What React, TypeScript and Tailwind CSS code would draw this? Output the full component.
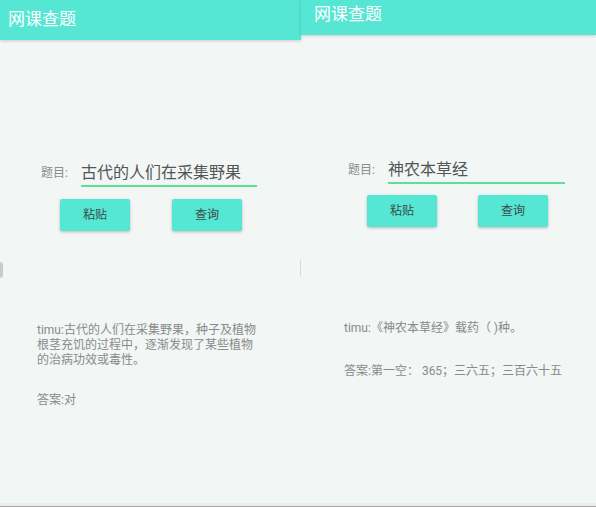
import React from 'react'

const font = { fontFamily: 'Roboto, "Noto Sans CJK SC", "Noto Sans", sans-serif' }

interface PanelProps {
  headerH: string
  titleX: string
  question: string
  rowTop: string
  labelX: string
  inputW: string
  btnTop: string
  btnX: string
  btnGap: string
  textTop: string
  textX: string
  textW: string
  lines: string[]
  answerGap: string
  answer: string
  width: string
}

function Panel(p: PanelProps) {
  return (
    <div className={`flex flex-col ${p.width} h-full bg-[#f2f6f5] relative`}>
      {/* Toolbar */}
      <div className={`${p.headerH} bg-[#55e6d4] shadow-[0_1px_3px_rgba(0,0,0,0.18)] flex items-end z-10`}>
        <div className={`${p.titleX} text-white text-[17px] leading-none pb-[12px]`}>网课查题</div>
      </div>

      {/* Input row */}
      <div className={`flex items-end ${p.rowTop} ${p.labelX}`}>
        <span className="text-[12px] text-[#8d8d8d] w-[40px] pb-[5px]">题目:</span>
        <div className={`${p.inputW} border-b-2 border-[#5fdf91] text-[16px] leading-[22px] text-[#555] pb-[1px]`}>
          {p.question}
        </div>
      </div>

      {/* Buttons */}
      <div className={`flex ${p.btnTop} ${p.btnX} ${p.btnGap}`}>
        <button className="w-[70px] h-[32px] bg-[#55e6d4] rounded-[2px] shadow-[0_1px_3px_rgba(0,0,0,0.25)] text-[12px] text-[#3d4a48]">
          粘贴
        </button>
        <button className="w-[70px] h-[32px] bg-[#55e6d4] rounded-[2px] shadow-[0_1px_3px_rgba(0,0,0,0.25)] text-[12px] text-[#3d4a48]">
          查询
        </button>
      </div>

      {/* Result */}
      <div className={`${p.textTop} ${p.textX} ${p.textW} text-[12px] leading-[15px] text-[#8a8a8a]`}>
        {p.lines.map((l, i) => (
          <div key={i}>{l}</div>
        ))}
      </div>
      <div className={`${p.answerGap} ${p.textX} text-[12px] leading-[15px] text-[#8a8a8a]`}>{p.answer}</div>
    </div>
  )
}

export default function App() {
  return (
    <div style={font} className="w-[596px] h-[507px] flex flex-col overflow-hidden bg-[#f2f6f5]">
      <div className="flex flex-1 relative">
        <Panel
          width="w-[301px]"
          headerH="h-[40px]"
          titleX="pl-[8px]"
          question="古代的人们在采集野果"
          rowTop="mt-[122px]"
          labelX="pl-[41px]"
          inputW="w-[176px]"
          btnTop="mt-[12px]"
          btnX="pl-[60px]"
          btnGap="gap-[42px]"
          textTop="mt-[92px]"
          textX="pl-[37px]"
          textW="w-[270px]"
          lines={['timu:古代的人们在采集野果，种子及植物', '根茎充饥的过程中，逐渐发现了某些植物', '的治病功效或毒性。']}
          answerGap="mt-[25px]"
          answer="答案:对"
        />
        <Panel
          width="w-[295px]"
          headerH="h-[35px]"
          titleX="pl-[13px]"
          question="神农本草经"
          rowTop="mt-[124px]"
          labelX="pl-[47px]"
          inputW="w-[177px]"
          btnTop="mt-[11px]"
          btnX="pl-[66px]"
          btnGap="gap-[41px]"
          textTop="mt-[94px]"
          textX="pl-[43px]"
          textW="w-[260px]"
          lines={['timu:《神农本草经》载药（ )种。']}
          answerGap="mt-[28px]"
          answer="答案:第一空： 365；三六五；三百六十五"
        />
        {/* scroll edge glow remnants */}
        <div className="absolute left-0 top-[262px] w-[3px] h-[16px] rounded-r-full bg-[#c8cccb]" />
        <div className="absolute left-[300px] top-[260px] w-[1px] h-[16px] bg-[#d5d9d8]" />
      </div>
      <div className="h-[3px] bg-[#ececec]" />
      <div className="h-[1px] bg-[#a8a8a8]" />
    </div>
  )
}
